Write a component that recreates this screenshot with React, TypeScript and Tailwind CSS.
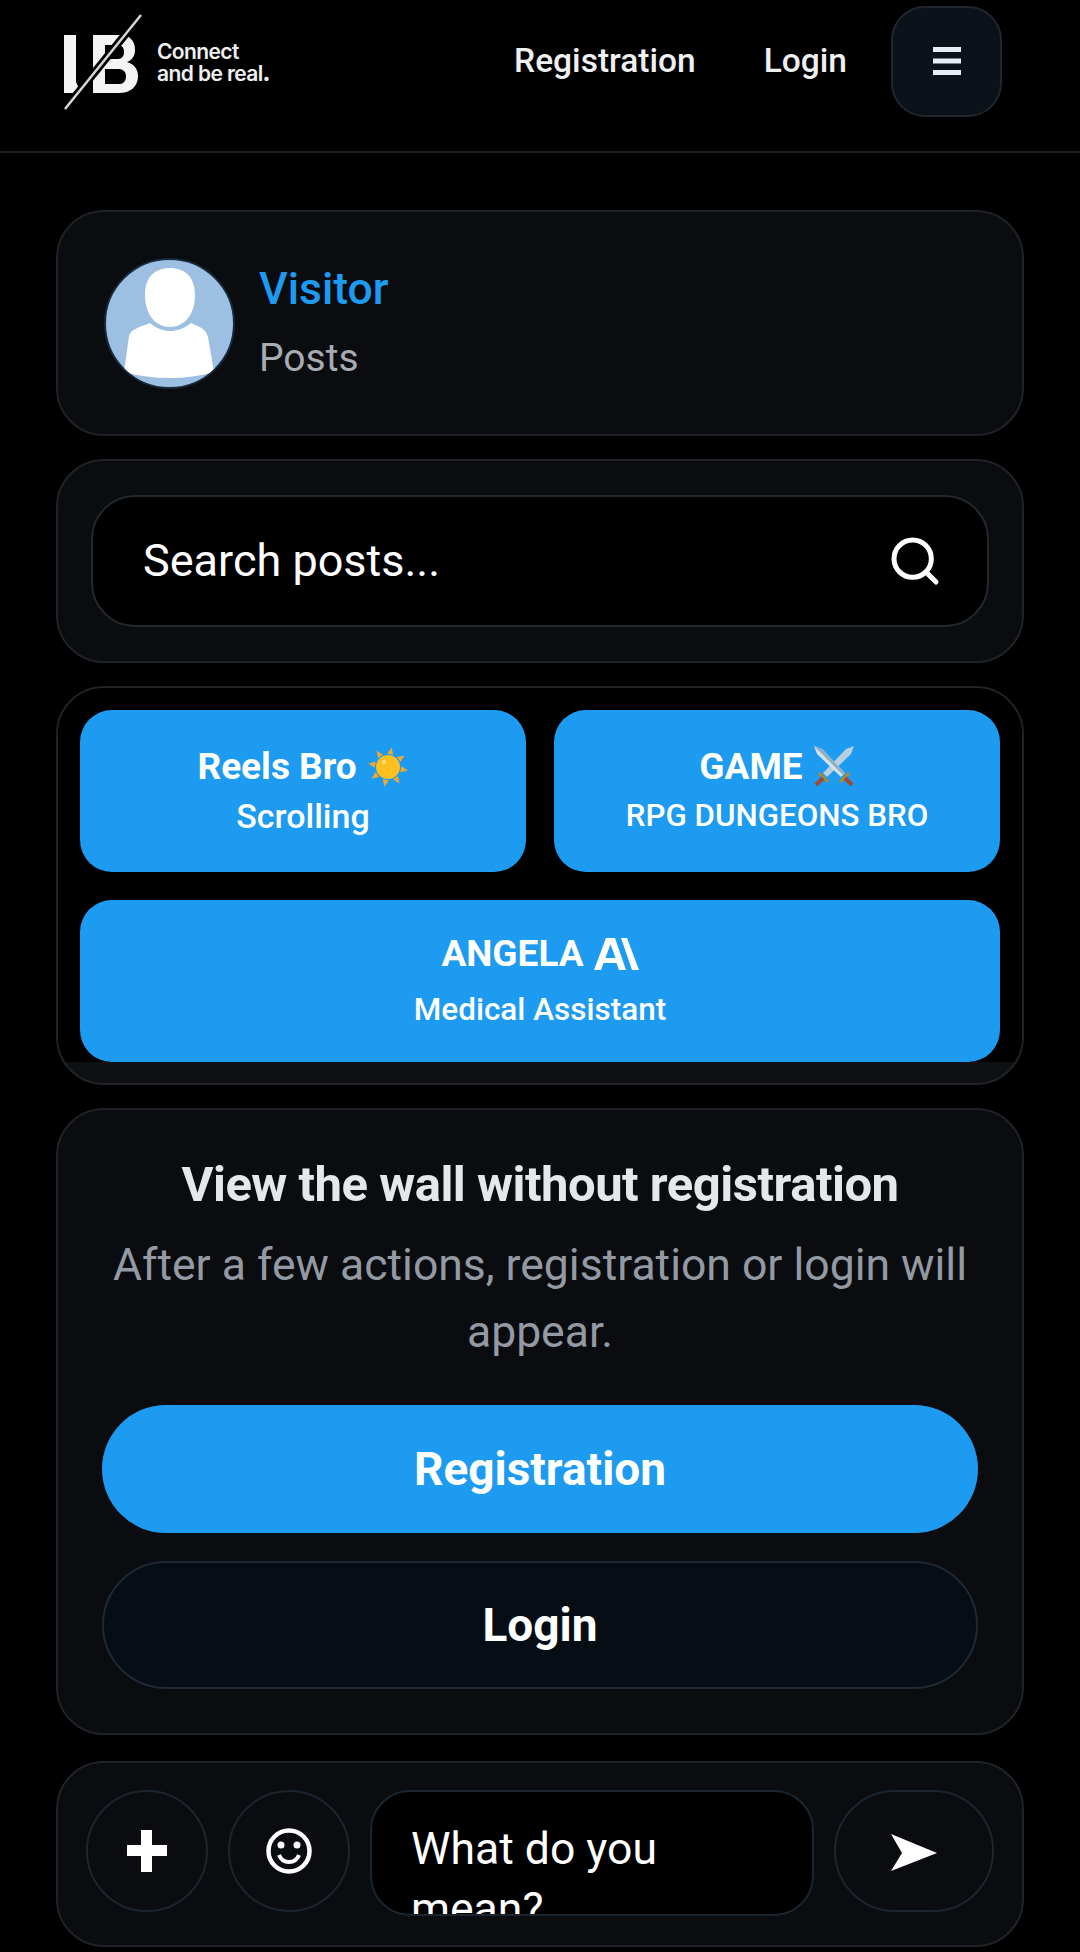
import { Search } from "lucide-react";

const font = "font-['Roboto',sans-serif]";

function Logo() {
  return (
    <div className="mt-[1px] flex items-center">
      <svg width="85" height="100" viewBox="60 12 85 100" className="shrink-0">
        <path d="M64 35h12v47l5 11H64z" fill="#f4f4f4" />
        <path
          fillRule="evenodd"
          d="M93 35h27c10 0 15 6 15 15 0 6-3 10-8 12 7 2 11 7 11 14 0 11-8 17-19 17H93zM105 45v14h13c4 0 6-3 6-7s-2-7-6-7zM105 69v15h15c4 0 6-4 6-8s-3-7-7-7z"
          fill="#f4f4f4"
        />
        <path d="M65 109L141 15" stroke="#000" strokeWidth="8" />
        <path d="M65 109L141 15" stroke="#d6d6d6" strokeWidth="2.500" />
      </svg>
      <div className="mt-[2px] ml-[12px] font-['Inter',sans-serif] text-[21px] leading-[22px] font-semibold tracking-[-0.6px] text-[#f0f0f0]">
        <div>Connect</div>
        <div>
          and be real<span className="font-black">.</span>
        </div>
      </div>
    </div>
  );
}

function SunEmoji() {
  return (
    <svg width="42" height="42" viewBox="0 0 42 42" className="shrink-0">
      <g fill="#f0a830">
        {[10, 55, 100, 145, 190, 235, 280, 325].map((deg) => (
          <path key={deg} d="M21 1l3 7h-6z" transform={`rotate(${deg} 21 21)`} />
        ))}
      </g>
      <circle cx="21" cy="21" r="12" fill="#fdc01e" />
      <circle cx="17" cy="16" r="2" fill="#ffe082" />
    </svg>
  );
}

function SwordsEmoji() {
  return (
    <svg width="42" height="42" viewBox="0 0 42 42" className="shrink-0">
      <path d="M41 0l-3 8-24 23-4-4L33 3z" fill="#b5d0e0" />
      <path d="M1 0l3 8 24 23 4-4L9 3z" fill="#d3e2ec" />
      <path d="M1 0l8 3 23 24-2 2z" fill="#8fb0c4" />
      <path d="M6 27l9 9" stroke="#b08a2e" strokeWidth="3" />
      <path d="M36 27l-9 9" stroke="#b08a2e" strokeWidth="3" />
      <path d="M10 32l-7 7" stroke="#9c4a30" strokeWidth="4" />
      <path d="M32 32l7 7" stroke="#9c4a30" strokeWidth="4" />
    </svg>
  );
}

function AngelaMark() {
  return (
    <svg width="45" height="32" viewBox="0 0 45 32" className="shrink-0">
      <path
        fillRule="evenodd"
        d="M12 0h9l11 32h-7l-2.500-7H9.500L7 32H0zM16.500 6l-5 14h10z"
        fill="#fff"
      />
      <path d="M27 0h6l12 32h-7z" fill="#fff" />
    </svg>
  );
}

function ShortcutButton({
  title,
  subtitle,
  icon,
  className,
  subClass,
}: {
  title: string;
  subtitle: string;
  icon: React.ReactNode;
  className: string;
  subClass: string;
}) {
  return (
    <button
      className={`flex h-[162px] flex-col items-center justify-center rounded-[32px] bg-[#1d9bf0] text-white ${className}`}
    >
      <span className="flex items-center gap-[10px] text-[37px] leading-[42px] font-bold">
        {title}
        {icon}
      </span>
      <span className={`leading-[40px] font-medium ${subClass}`}>{subtitle}</span>
    </button>
  );
}

export default function App() {
  return (
    <div className={`h-[1952px] overflow-hidden bg-black ${font}`}>
      <header className="flex h-[153px] items-center justify-between border-b-2 border-[#1f2024] pr-[78px] pb-[29px] pl-[60px]">
        <Logo />
        <nav className="flex items-center text-[33.500px] font-medium text-[#eef0f2]">
          <a className="mr-[68px]">Registration</a>
          <a className="mr-[44px]">Login</a>
          <button className="flex h-[111px] w-[111px] items-center justify-center rounded-[34px] border-2 border-[#20262e] bg-[#0c1219]">
            <svg width="28" height="28" viewBox="0 0 28 28" fill="#e6eef7">
              <rect y="0" width="28" height="5" />
              <rect y="11.500" width="28" height="5" />
              <rect y="23" width="28" height="5" />
            </svg>
          </button>
        </nav>
      </header>

      <main className="flex flex-col gap-[23px] px-[56px] pt-[57px]">
        <section className="flex h-[226px] items-center gap-[24px] rounded-[48px] border-2 border-[#1f2227] bg-[#0a0c10] px-[46px]">
          <div className="h-[131px] w-[131px] shrink-0 overflow-hidden rounded-full border-2 border-[#17293a] bg-[#9dbfe2]">
            <svg viewBox="2 2 127 127" width="127" height="127">
              <path
                d="M66 10c15 0 25 9 25 27 0 20-11 32-25 32S41 57 41 37c0-18 10-27 25-27zM46 65c7 6 14 8 20 8s14-2 21-8c9 4 15 6 17 14l6 35c-14 4-29 6-44 6-16 0-31-2-46-6l5-36c2-7 11-9 21-13z"
                fill="#fff"
              />
            </svg>
          </div>
          <div className="mt-[-4px]">
            <div className="text-[44.500px] leading-[56px] font-medium text-[#1d9bf0]">Visitor</div>
            <div className="mt-[18px] text-[39px] leading-[46px] text-[#a7abb2]">Posts</div>
          </div>
        </section>

        <section className="flex h-[204px] items-center rounded-[48px] border-2 border-[#1f2227] bg-[#0a0c10] px-[33px]">
          <div className="flex h-[132px] w-full items-center justify-between rounded-[44px] border-2 border-[#23272e] bg-black pr-[44px] pl-[50px]">
            <span className="text-[45px] text-white">Search posts...</span>
            <Search size={56} strokeWidth={5} absoluteStrokeWidth className="text-white" />
          </div>
        </section>

        <section className="h-[399px] overflow-hidden rounded-[48px] border-2 border-[#1f2227] bg-[#0e1013]">
          <div className="grid grid-cols-2 gap-x-[28px] gap-y-[28px] bg-black px-[22px] pt-[22px]">
            <ShortcutButton title="Reels Bro" subtitle="Scrolling" icon={<SunEmoji />} className="" subClass="mt-[8px] text-[34px]" />
            <ShortcutButton title="GAME" subtitle="RPG DUNGEONS BRO" icon={<SwordsEmoji />} className="" subClass="mt-[8px] text-[31.300px]" />
            <ShortcutButton title="ANGELA" subtitle="Medical Assistant" icon={<AngelaMark />} className="col-span-2" subClass="mt-[15px] text-[31.500px]" />
          </div>
        </section>

        <section className="flex h-[627px] flex-col items-center rounded-[48px] border-2 border-[#1f2227] bg-[#0a0c10] px-[44px] pt-[45px]">
          <h1 className="text-[49px] leading-[60px] font-bold tracking-[-0.5px] whitespace-nowrap text-[#e5e7ea]">
            View the wall without registration
          </h1>
          <p className="mt-[17px] text-center text-[44.500px] leading-[67px] text-[#949aa3]">
            After a few actions, registration or login will appear.
          </p>
          <button className="mt-[39px] h-[128px] w-full rounded-full bg-[#1d9bf0] text-[46px] font-bold text-white">
            Registration
          </button>
          <button className="mt-[28px] h-[128px] w-full rounded-full border-2 border-[#1e2935] bg-[#060d14] text-[46px] font-bold text-white">
            Login
          </button>
        </section>

        <section className="mt-[3px] flex h-[186px] items-start gap-[20px] rounded-[48px] border-2 border-[#1f2227] bg-[#0a0c10] pt-[27px] pl-[28px]">
          <button className="flex h-[122px] w-[122px] shrink-0 items-center justify-center rounded-full border-2 border-[#1b2530] text-white">
            <svg width="40" height="42" viewBox="0 0 40 42" fill="#fff">
              <path d="M14 0h11v15h15v11H25v16H14V26H0V15h14z" />
            </svg>
          </button>
          <button className="flex h-[122px] w-[122px] shrink-0 items-center justify-center rounded-full border-2 border-[#1b2530] text-white">
            <svg width="46" height="46" viewBox="0 0 46 46" fill="none">
              <circle cx="23" cy="23" r="20.500" stroke="#fff" strokeWidth="4.500" />
              <circle cx="15" cy="17" r="3.500" fill="#fff" />
              <circle cx="31" cy="17" r="3.500" fill="#fff" />
              <path d="M13 27c2 5 6 7 10 7s8-2 10-7" stroke="#fff" strokeWidth="4" />
            </svg>
          </button>
          <div className="h-[126px] w-[444px] shrink-0 overflow-hidden rounded-[40px] border-2 border-[#1b2530] bg-black px-[39px] pt-[27px] text-[44.500px] leading-[60px] text-white">
            What do you mean?
          </div>
          <button className="flex h-[122px] w-[160px] shrink-0 items-center justify-center rounded-full border-2 border-[#1b2530]">
            <svg width="46" height="38" viewBox="0 0 46 38" className="mt-[3px]">
              <path d="M0 0l46 19L0 37l11-18z" fill="#fff" />
            </svg>
          </button>
        </section>
      </main>
    </div>
  );
}
